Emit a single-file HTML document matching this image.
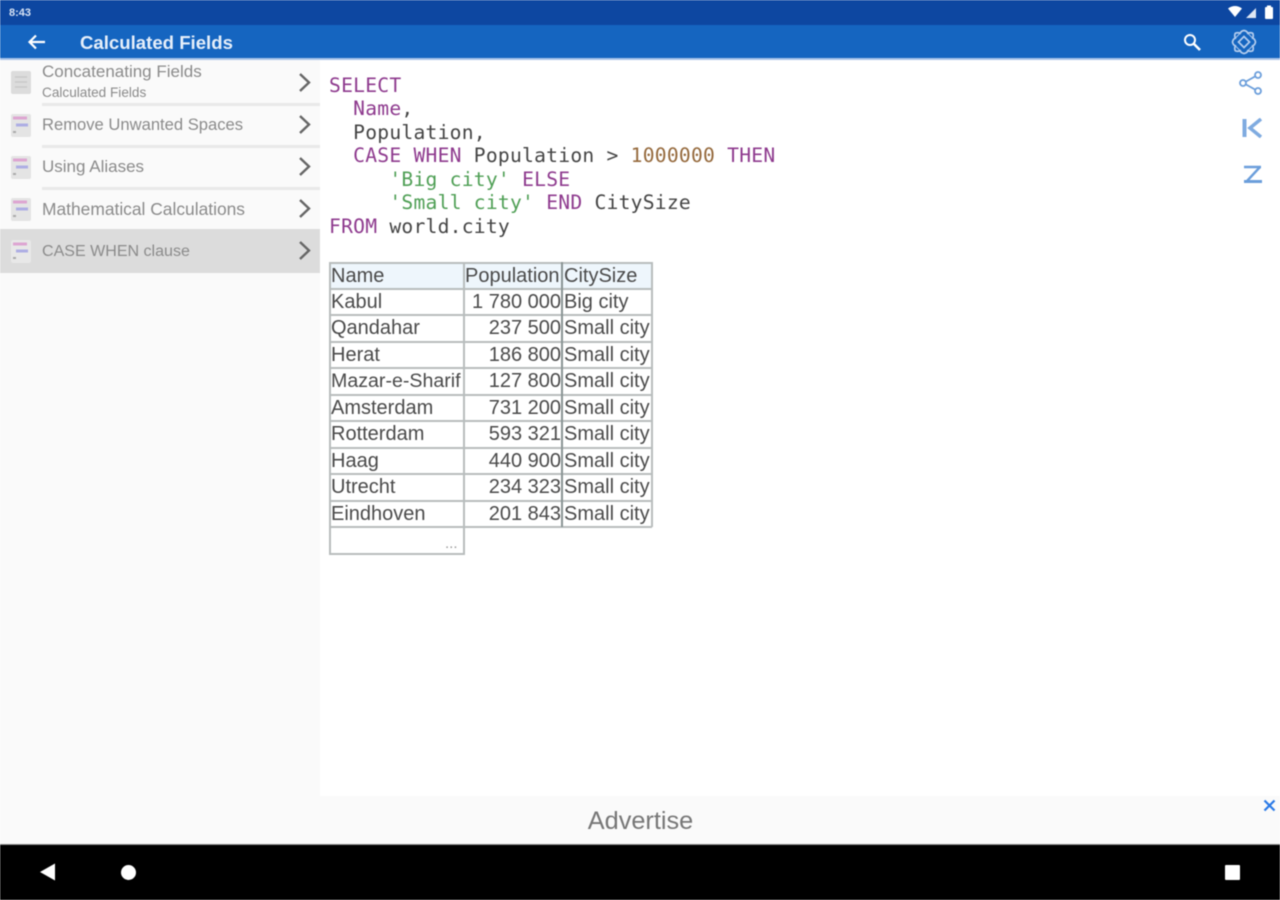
<!DOCTYPE html>
<html><head><meta charset="utf-8">
<style>
html,body{margin:0;padding:0;width:1280px;height:900px;overflow:hidden;background:#fff}
#r{position:relative;width:1280px;height:900px;overflow:hidden;font-family:"Liberation Sans",sans-serif;filter:blur(.5px)}
.a{position:absolute;white-space:nowrap}
.it{position:absolute;left:42px;color:#8b8b8b;font-size:16.8px;line-height:20px;white-space:nowrap}
.sep{position:absolute;left:42px;width:278px;height:3px;background:#e9e9e9}
.code{position:absolute;left:329px;font:19.65px/23.6px "DejaVu Sans Mono","Liberation Mono",monospace;letter-spacing:.24px;color:#444;white-space:pre}
.k{color:#8e3a8e}.s{color:#4f9f55}.n{color:#95693c}
.c{position:absolute;font-size:20px;line-height:26px;color:#4a4a4a;white-space:nowrap}
.h{position:absolute;background:#b8bdbd}
</style></head><body><div id="r">
<div class="a" style="left:0;top:0;width:1280px;height:25px;background:#0d47a1"></div>
<div class="a" style="left:0;top:25px;width:1280px;height:33px;background:#1565c0"></div>
<div class="a" style="left:0;top:58px;width:1280px;height:2px;background:#a9c4e8"></div>
<div class="a" style="left:9px;top:6px;font-size:11px;line-height:14px;color:#d6e2f4;font-weight:bold">8:43</div>
<svg class="a" style="left:1226px;top:4px" width="50" height="16" viewBox="0 0 50 16"><path d="M2 4.500Q9-.5 16 4.500L9 13Z" fill="#fff"/><path d="M20 14L30 4V14Z" fill="#dfe7f3"/><rect x="39" y="3" width="8" height="12" rx="1" fill="#fff"/><rect x="41" y="1.500" width="4" height="2" fill="#fff"/></svg>
<svg class="a" style="left:26px;top:32px" width="22" height="20" viewBox="0 0 22 20"><path d="M19 10H4M10 3.500L3.500 10L10 16.500" fill="none" stroke="#fff" stroke-width="2.2"/></svg>
<div class="a" style="left:80px;top:31px;font-size:18.6px;line-height:24px;font-weight:bold;color:#e6effa">Calculated Fields</div>
<svg class="a" style="left:1180px;top:31px" width="24" height="22" viewBox="0 0 24 22"><circle cx="10" cy="9" r="5" fill="none" stroke="#fff" stroke-width="2"/><path d="M14 13L20 19" stroke="#fff" stroke-width="2.6"/></svg>
<svg class="a" style="left:1231px;top:29px" width="26" height="26" viewBox="0 0 26 26" fill="none" stroke="#b4cdee" stroke-width="1.700"><path d="M13 1.500Q16 2 16.800 4.300Q19.500 3.200 21.700 4.300Q22.800 6.500 21.700 9.200Q24 10 24.500 13Q24 16 21.700 16.800Q22.800 19.500 21.700 21.700Q19.500 22.800 16.800 21.700Q16 24 13 24.500Q10 24 9.200 21.700Q6.500 22.800 4.300 21.700Q3.200 19.500 4.300 16.800Q2 16 1.500 13Q2 10 4.300 9.200Q3.200 6.500 4.300 4.300Q6.500 3.200 9.200 4.300Q10 2 13 1.500Z"/><path d="M13 7.500L18.500 13L13 18.500L7.500 13Z"/><path d="M4.300 9.200L9.200 4.300M16.800 4.300L21.700 9.200M21.700 16.800L16.800 21.700M9.200 21.700L4.300 16.800" stroke-width="1"/></svg>

<div class="a" style="left:0;top:60px;width:320px;height:736px;background:#fafafa"></div>
<div class="a" style="left:0;top:229px;width:320px;height:44px;background:#dcdcdc"></div>
<div class="sep" style="top:103px"></div><div class="sep" style="top:145px"></div><div class="sep" style="top:187px"></div>
<div class="it" style="top:62px;font-size:17px">Concatenating Fields</div>
<div class="it" style="top:83px;font-size:13.6px">Calculated Fields</div>
<div class="it" style="top:115px;font-size:16.6px">Remove Unwanted Spaces</div>
<div class="it" style="top:157px;font-size:17px">Using Aliases</div>
<div class="it" style="top:199px;font-size:17.4px">Mathematical Calculations</div>
<div class="it" style="top:241px;font-size:16.05px">CASE WHEN clause</div>
<svg class="a" style="left:10px;top:70px" width="22" height="25" viewBox="0 0 22 25"><rect x="1" y="1" width="20" height="23" rx="2" fill="#dcdcdc"/><path d="M5 7h12M5 12h12M5 17h12" stroke="#c8c8c8" stroke-width="1.500"/></svg>
<svg class="a" style="left:10px;top:113px" width="22" height="25" viewBox="0 0 22 25"><rect x="1" y="1" width="20" height="23" rx="2" fill="#e4e4e4"/><path d="M3 5h14" stroke="#dda6d2" stroke-width="3"/><path d="M6 12h12" stroke="#aeaee4" stroke-width="3"/><path d="M3 19h3" stroke="#aaa" stroke-width="2"/></svg>
<svg class="a" style="left:10px;top:155px" width="22" height="25" viewBox="0 0 22 25"><rect x="1" y="1" width="20" height="23" rx="2" fill="#e4e4e4"/><path d="M3 5h14" stroke="#dda6d2" stroke-width="3"/><path d="M6 12h12" stroke="#aeaee4" stroke-width="3"/><path d="M3 19h3" stroke="#aaa" stroke-width="2"/></svg>
<svg class="a" style="left:10px;top:197px" width="22" height="25" viewBox="0 0 22 25"><rect x="1" y="1" width="20" height="23" rx="2" fill="#e4e4e4"/><path d="M3 5h14" stroke="#dda6d2" stroke-width="3"/><path d="M6 12h12" stroke="#aeaee4" stroke-width="3"/><path d="M3 19h3" stroke="#aaa" stroke-width="2"/></svg>
<svg class="a" style="left:10px;top:239px" width="22" height="25" viewBox="0 0 22 25"><rect x="1" y="1" width="20" height="23" rx="2" fill="#e8e8e8"/><path d="M3 5h14" stroke="#dda6d2" stroke-width="3"/><path d="M6 12h12" stroke="#aeaee4" stroke-width="3"/><path d="M3 19h3" stroke="#aaa" stroke-width="2"/></svg>
<svg class="a" style="left:298px;top:72px" width="14" height="190" viewBox="0 0 14 190" fill="none" stroke="#666" stroke-width="2.400"><path d="M2 2l9 8.500-9 8.500M2 44l9 8.500-9 8.500M2 86l9 8.500-9 8.500M2 128l9 8.500-9 8.500M2 170l9 8.500-9 8.500"/></svg>

<div class="code" style="top:73.500px"><span class="k">SELECT</span>
  <span class="k">Name</span>,
  Population,
  <span class="k">CASE WHEN</span> Population &gt; <span class="n">1000000</span> <span class="k">THEN</span>
     <span class="s">'Big city'</span> <span class="k">ELSE</span>
     <span class="s">'Small city'</span> <span class="k">END</span> CitySize
<span class="k">FROM</span> world.city</div>

<svg class="a" style="left:1238px;top:70px" width="28" height="26" viewBox="0 0 28 26" fill="none" stroke="#6b9edb" stroke-width="1.800"><circle cx="20" cy="5" r="3"/><circle cx="5" cy="13" r="3"/><circle cx="20" cy="21" r="3"/><path d="M8 11.500L17 6.500M8 14.500L17 19.500"/></svg>
<svg class="a" style="left:1241px;top:118px" width="24" height="20" viewBox="0 0 24 20" fill="none" stroke="#7fabe0"><path d="M3.500 1V19" stroke-width="4"/><path d="M20 1L9 10L20 19" stroke-width="3.500"/></svg>
<svg class="a" style="left:1241px;top:164px" width="24" height="20" viewBox="0 0 24 20" fill="none" stroke="#6b9edb" stroke-width="2.400"><path d="M3 3H20"/><path d="M19 3L6 17"/><path d="M3 17.500H21" stroke-width="3"/></svg>

<div class="a" style="left:330px;top:263px;width:322px;height:25px;background:#eef6fc"></div>
<div class="h" style="left:329px;top:262px;width:323px;height:2px"></div>
<div class="h" style="left:329px;top:288px;width:323px;height:2px"></div>
<div class="h" style="left:329px;top:314px;width:323px;height:2px"></div>
<div class="h" style="left:329px;top:341px;width:323px;height:2px"></div>
<div class="h" style="left:329px;top:367px;width:323px;height:2px"></div>
<div class="h" style="left:329px;top:394px;width:323px;height:2px"></div>
<div class="h" style="left:329px;top:420px;width:323px;height:2px"></div>
<div class="h" style="left:329px;top:447px;width:323px;height:2px"></div>
<div class="h" style="left:329px;top:473px;width:323px;height:2px"></div>
<div class="h" style="left:329px;top:500px;width:323px;height:2px"></div>
<div class="h" style="left:329px;top:526px;width:323px;height:2px"></div>
<div class="h" style="left:329px;top:553px;width:135px;height:2px"></div>
<div class="h" style="left:329px;top:262px;width:2px;height:293px"></div>
<div class="h" style="left:463px;top:262px;width:2px;height:293px"></div>
<div class="h" style="left:561px;top:262px;width:2px;height:265px;background:#8a9494"></div>
<div class="h" style="left:651px;top:262px;width:2px;height:265px"></div>

<div class="c" style="left:331px;top:262.500px">Name</div><div class="c" style="left:465px;top:262.500px">Population</div><div class="c" style="left:564px;top:262.500px">CitySize</div>
<div class="c" style="left:331px;top:288.500px">Kabul</div><div class="c" style="right:719px;top:288.500px">1 780 000</div><div class="c" style="left:564px;top:288.500px">Big city</div>
<div class="c" style="left:331px;top:315px">Qandahar</div><div class="c" style="right:719px;top:315px">237 500</div><div class="c" style="left:564px;top:315px">Small city</div>
<div class="c" style="left:331px;top:342px">Herat</div><div class="c" style="right:719px;top:342px">186 800</div><div class="c" style="left:564px;top:342px">Small city</div>
<div class="c" style="left:331px;top:368px;font-size:19.6px">Mazar-e-Sharif</div><div class="c" style="right:719px;top:368px">127 800</div><div class="c" style="left:564px;top:368px">Small city</div>
<div class="c" style="left:331px;top:395px">Amsterdam</div><div class="c" style="right:719px;top:395px">731 200</div><div class="c" style="left:564px;top:395px">Small city</div>
<div class="c" style="left:331px;top:421px">Rotterdam</div><div class="c" style="right:719px;top:421px">593 321</div><div class="c" style="left:564px;top:421px">Small city</div>
<div class="c" style="left:331px;top:448px">Haag</div><div class="c" style="right:719px;top:448px">440 900</div><div class="c" style="left:564px;top:448px">Small city</div>
<div class="c" style="left:331px;top:474px">Utrecht</div><div class="c" style="right:719px;top:474px">234 323</div><div class="c" style="left:564px;top:474px">Small city</div>
<div class="c" style="left:331px;top:501px">Eindhoven</div><div class="c" style="right:719px;top:501px">201 843</div><div class="c" style="left:564px;top:501px">Small city</div>
<div class="c" style="left:445px;top:531px;font-size:15px;color:#999">...</div>

<div class="a" style="left:0;top:796px;width:1280px;height:48px;background:#fafafa"></div>
<div class="a" style="left:0;top:844px;width:1280px;height:1px;background:#888"></div>
<div class="a" style="left:0;top:845px;width:1280px;height:55px;background:#000"></div>
<div class="a" style="left:0;top:807px;width:1281px;text-align:center;font-size:25.300px;line-height:28px;color:#777">Advertise</div>
<svg class="a" style="left:1263px;top:799px" width="13" height="13" viewBox="0 0 13 13"><path d="M1.500 1.500L11.500 11.500M11.500 1.500L1.500 11.500" stroke="#2979e6" stroke-width="2.200"/></svg>
<svg class="a" style="left:38px;top:862px" width="20" height="20" viewBox="0 0 20 20"><path d="M2 10L17 1.500V18.500Z" fill="#fff"/></svg>
<div class="a" style="left:121px;top:865px;width:15px;height:15px;border-radius:50%;background:#fff"></div>
<div class="a" style="left:1225px;top:865px;width:15px;height:15px;border-radius:1px;background:#fff"></div>
</div></body></html>
